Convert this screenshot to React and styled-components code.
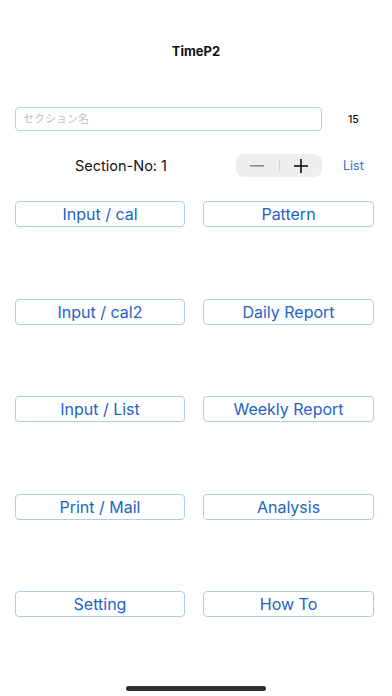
import React from "react";
import styled, { createGlobalStyle } from "styled-components";

const GlobalStyle = createGlobalStyle`
  html, body {
    margin: 0;
    padding: 0;
    background: #ffffff;
    font-family: Inter, "Noto Sans", "Noto Sans CJK JP", sans-serif;
    -webkit-font-smoothing: antialiased;
  }
`;

const Screen = styled.div`
  position: relative;
  width: 392px;
  height: 696px;
  background: #fff;
  overflow: hidden;
`;

const Title = styled.h1`
  margin: 0;
  padding-top: 43px;
  height: 16px;
  line-height: 16px;
  font-size: 13px;
  font-weight: 700;
  color: #111;
  text-align: center;
`;

const NameRow = styled.div`
  display: flex;
  align-items: center;
  margin-top: 48px;
  padding-left: 15px;
`;

const NameInput = styled.input`
  box-sizing: border-box;
  width: 307px;
  height: 24px;
  border: 1px solid #b5d3df;
  border-radius: 4px;
  padding: 0 7px;
  font-size: 11px;
  font-family: inherit;
  color: #222;
  outline: none;
  &::placeholder {
    color: #c3c3c7;
  }
`;

const Count = styled.span`
  margin-left: 26px;
  font-size: 10.5px;
  font-weight: 500;
  color: #111;
`;

const SectionRow = styled.div`
  display: flex;
  align-items: center;
  margin-top: 23px;
  height: 23px;
`;

const SectionLabel = styled.span`
  box-sizing: border-box;
  width: 236px;
  padding-left: 6px;
  text-align: center;
  font-size: 14.5px;
  color: #111;
`;

const Stepper = styled.div`
  display: flex;
  align-items: center;
  width: 86px;
  height: 23px;
  border-radius: 8px;
  background: #eeeef0;
`;

const StepButton = styled.button`
  flex: 1;
  height: 100%;
  border: none;
  background: none;
  padding: 0;
  display: flex;
  align-items: center;
  justify-content: center;
  color: ${(p) => (p.$muted ? "#8a8a8e" : "#111")};
`;

const StepDivider = styled.span`
  width: 1px;
  height: 12px;
  background: #d3d3d6;
`;

const ListLink = styled.span`
  margin-left: 21px;
  font-size: 12.5px;
  color: #2f6fd1;
`;

const MenuGrid = styled.div`
  display: grid;
  grid-template-columns: 170px 171px;
  grid-auto-rows: 26px;
  column-gap: 18px;
  row-gap: 71.5px;
  margin-top: 24px;
  padding-left: 15px;
`;

const MenuButton = styled.button`
  box-sizing: border-box;
  border: 1px solid #abd0e0;
  border-radius: 4px;
  background: #fff;
  font-family: inherit;
  font-size: 16px;
  font-weight: 400;
  color: #2363c6;
  padding: 0;
  cursor: pointer;
`;

const HomeBar = styled.div`
  position: absolute;
  left: 126px;
  bottom: 5px;
  width: 140px;
  height: 5px;
  border-radius: 3px;
  background: #2e2e2e;
`;

const items = [
  "Input / cal",
  "Pattern",
  "Input / cal2",
  "Daily Report",
  "Input / List",
  "Weekly Report",
  "Print / Mail",
  "Analysis",
  "Setting",
  "How To",
];

export default function App() {
  return (
    <Screen>
      <GlobalStyle />
      <Title>TimeP2</Title>

      <NameRow>
        <NameInput placeholder="セクション名" />
        <Count>15</Count>
      </NameRow>

      <SectionRow>
        <SectionLabel>Section-No: 1</SectionLabel>
        <Stepper>
          <StepButton $muted>
            <svg width="14" height="2" viewBox="0 0 14 2">
              <rect width="14" height="1.6" fill="currentColor" />
            </svg>
          </StepButton>
          <StepDivider />
          <StepButton>
            <svg width="14" height="14" viewBox="0 0 14 14">
              <rect x="0" y="6.2" width="14" height="1.6" fill="currentColor" />
              <rect x="6.2" y="0" width="1.6" height="14" fill="currentColor" />
            </svg>
          </StepButton>
        </Stepper>
        <ListLink>List</ListLink>
      </SectionRow>

      <MenuGrid>
        {items.map((label) => (
          <MenuButton key={label}>{label}</MenuButton>
        ))}
      </MenuGrid>

      <HomeBar />
    </Screen>
  );
}
